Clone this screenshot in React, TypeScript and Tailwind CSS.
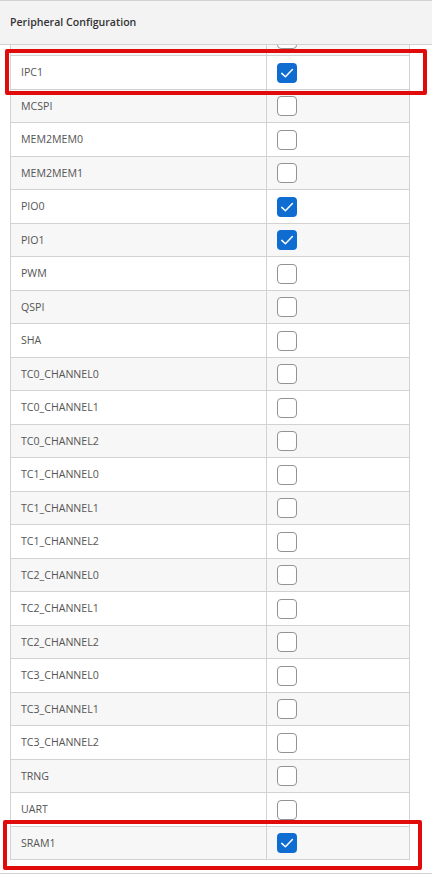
import React from "react";

type Row = { name: string; on: boolean };

// first row is the one scrolled mostly out of view
const rows: Row[] = [
  { name: "", on: false },
  { name: "IPC1", on: true },
  { name: "MCSPI", on: false },
  { name: "MEM2MEM0", on: false },
  { name: "MEM2MEM1", on: false },
  { name: "PIO0", on: true },
  { name: "PIO1", on: true },
  { name: "PWM", on: false },
  { name: "QSPI", on: false },
  { name: "SHA", on: false },
  { name: "TC0_CHANNEL0", on: false },
  { name: "TC0_CHANNEL1", on: false },
  { name: "TC0_CHANNEL2", on: false },
  { name: "TC1_CHANNEL0", on: false },
  { name: "TC1_CHANNEL1", on: false },
  { name: "TC1_CHANNEL2", on: false },
  { name: "TC2_CHANNEL0", on: false },
  { name: "TC2_CHANNEL1", on: false },
  { name: "TC2_CHANNEL2", on: false },
  { name: "TC3_CHANNEL0", on: false },
  { name: "TC3_CHANNEL1", on: false },
  { name: "TC3_CHANNEL2", on: false },
  { name: "TRNG", on: false },
  { name: "UART", on: false },
  { name: "SRAM1", on: true },
];

function Checkbox({ checked }: { checked: boolean }) {
  if (checked) {
    return (
      <div className="w-[20px] h-[20px] rounded-[4px] bg-[#0f6cd0] flex items-center justify-center">
        <svg width="20" height="20" viewBox="0 0 20 20" fill="none">
          <path d="M4.8 10.4 L8.4 13.8 L15.4 6.6" stroke="#fff" strokeWidth="1.5" strokeLinecap="round" strokeLinejoin="round" />
        </svg>
      </div>
    );
  }
  return <div className="w-[20px] h-[20px] rounded-[4px] bg-white border border-[#939393]" />;
}

export default function App() {
  return (
    <div className="relative w-[432px] h-[880px] bg-white overflow-hidden" style={{ fontFamily: '"Open Sans", "Noto Sans", sans-serif' }}>
      {/* header */}
      <div className="h-[45px] bg-[#f3f3f3] border-t border-b border-[#d2d2d2] flex items-center px-[10px]">
        <span className="text-[10.6px] font-semibold text-[#333]">Peripheral Configuration</span>
      </div>

      {/* scrolled table */}
      <div className="h-[829px] border-b border-[#d2d2d2] overflow-hidden">
        <div className="ml-[10px] w-[400px] border-l border-r border-[#d2d2d2] -mt-[22.5px]">
          {rows.map((r, i) => (
            <div
              key={i}
              className={"flex h-[33.5px] border-b border-[#d2d2d2] " + (i % 2 === 0 ? "bg-[#f7f7f7]" : "bg-white")}
            >
              <div className="w-[256px] border-r border-[#d2d2d2] flex items-center pl-[10px] pt-[2px] text-[10.6px] text-[#555]">
                {r.name}
              </div>
              <div className="flex-1 flex items-center pl-[10px] pt-[1px]">
                <Checkbox checked={r.on} />
              </div>
            </div>
          ))}
        </div>
      </div>

      {/* annotation boxes */}
      <div className="absolute left-[5px] top-[49px] w-[422px] h-[46px] border-[4px] border-[#e00b0b] rounded-[2px]" />
      <div className="absolute left-[3px] top-[820px] w-[419px] h-[50px] border-[4px] border-[#e00b0b] rounded-[2px]" />
    </div>
  );
}
